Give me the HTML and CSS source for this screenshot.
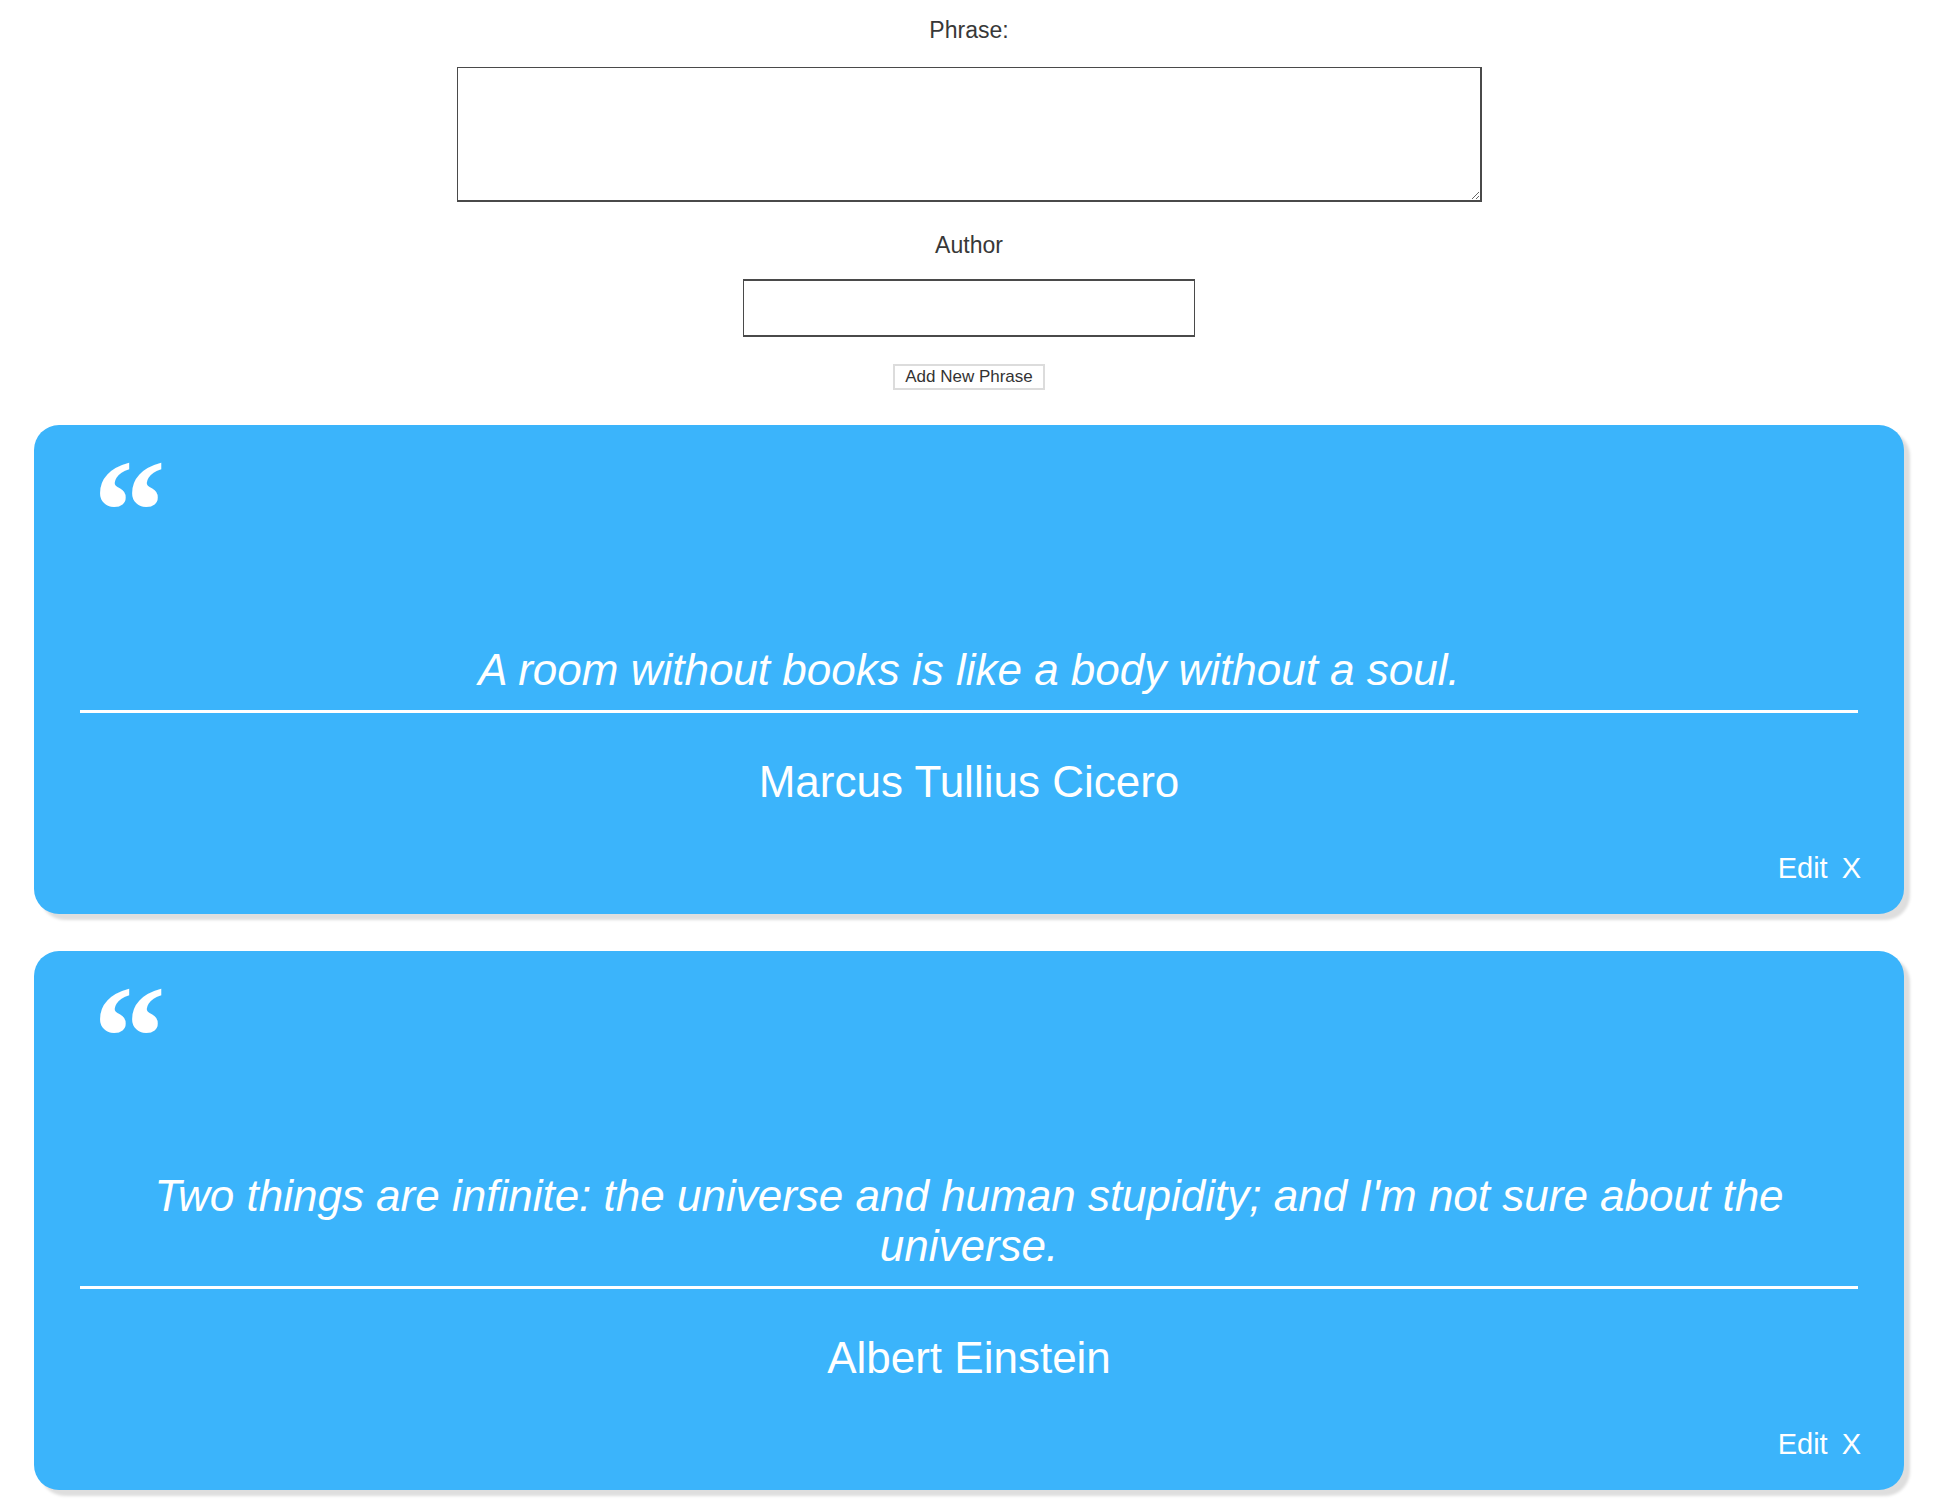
FILE: index.html
```html
<!DOCTYPE html>
<html lang="en">
<head>
<meta charset="utf-8">
<title>Phrases</title>
<link rel="stylesheet" href="styles.css">
</head>
<body>
<div class="page">
  <form class="phrase-form">
    <label class="field-label" for="phrase">Phrase:</label>
    <textarea class="phrase-input" id="phrase"></textarea>
    <label class="field-label field-label--author" for="author">Author</label>
    <input class="author-input" id="author" type="text">
    <button class="add-btn" type="button">Add New Phrase</button>
  </form>

  <div class="quote-list">
    <div class="quote-card">
      <div class="quote-mark">&ldquo;</div>
      <p class="quote-text">A room without books is like a body without a soul.</p>
      <p class="quote-author">Marcus Tullius Cicero</p>
      <div class="quote-actions">
        <button class="action-btn" type="button">Edit</button>
        <button class="action-btn" type="button">X</button>
      </div>
    </div>

    <div class="quote-card">
      <div class="quote-mark">&ldquo;</div>
      <p class="quote-text">Two things are infinite: the universe and human stupidity; and I'm not sure about the universe.</p>
      <p class="quote-author">Albert Einstein</p>
      <div class="quote-actions">
        <button class="action-btn" type="button">Edit</button>
        <button class="action-btn" type="button">X</button>
      </div>
    </div>
  </div>
</div>
</body>
</html>
```

FILE: styles.css
```css
html, body {
  margin: 0;
  padding: 0;
  background: #ffffff;
}

body {
  font-family: "Liberation Sans", Arial, Helvetica, sans-serif;
  color: #333333;
}

.page {
  width: 1938px;
}

.phrase-form {
  display: flex;
  flex-direction: column;
  align-items: center;
  padding-top: 17px;
  margin: 0;
}

.field-label {
  display: block;
  font-size: 23px;
  line-height: 26px;
  color: #383838;
}

.field-label--author {
  margin-top: 30px;
}

.phrase-input {
  display: block;
  box-sizing: border-box;
  width: 1025px;
  height: 135px;
  margin-top: 24px;
  padding: 2px;
  border: 1px solid #4a4a4a;
  border-bottom-width: 2px;
  border-right-width: 2px;
  border-radius: 0;
  background: #ffffff;
  font-family: "Liberation Sans", Arial, sans-serif;
  font-size: 16px;
  outline: none;
}

.author-input {
  display: block;
  box-sizing: border-box;
  width: 452px;
  height: 58px;
  margin-top: 21px;
  padding: 2px 4px;
  border: 2px solid #4a4a4a;
  border-left-width: 1px;
  border-right-width: 1px;
  border-radius: 0;
  background: #ffffff;
  font-family: "Liberation Sans", Arial, sans-serif;
  font-size: 20px;
  outline: none;
}

.add-btn {
  display: block;
  box-sizing: border-box;
  width: 152px;
  height: 26px;
  margin-top: 27px;
  padding: 0;
  border: 2px solid #dcdcdc;
  border-radius: 0;
  background: #ffffff;
  color: #333333;
  font-family: "Liberation Sans", Arial, sans-serif;
  font-size: 17px;
  line-height: 22px;
}

.quote-list {
  margin-top: 35px;
  display: flex;
  flex-direction: column;
  gap: 37px;
  padding-bottom: 10px;
}

.quote-card {
  box-sizing: border-box;
  width: 1870px;
  margin-left: 34px;
  padding: 13px 46px 29px;
  background: #3bb4fb;
  border-radius: 25px;
  box-shadow: 6px 6px 3px #dedede;
  color: #ffffff;
}

.quote-mark {
  height: 146px;
  margin-left: 13px;
  font-family: "Liberation Serif", "Times New Roman", serif;
  font-weight: bold;
  font-size: 146px;
  line-height: 146px;
}

.quote-text {
  margin: 61px 0 0;
  padding-bottom: 15px;
  border-bottom: 3px solid #ffffff;
  font-size: 44px;
  font-style: italic;
  line-height: 50px;
  text-align: center;
}

.quote-author {
  margin: 44px 0 0;
  font-size: 44px;
  line-height: 50px;
  text-align: center;
}

.quote-actions {
  display: flex;
  justify-content: flex-end;
  gap: 14px;
  margin-top: 45px;
  margin-right: -3px;
}

.action-btn {
  padding: 0;
  margin: 0;
  border: none;
  background: none;
  color: #ffffff;
  font-family: "Liberation Sans", Arial, sans-serif;
  font-size: 29px;
  line-height: 33px;
  cursor: pointer;
}
```
